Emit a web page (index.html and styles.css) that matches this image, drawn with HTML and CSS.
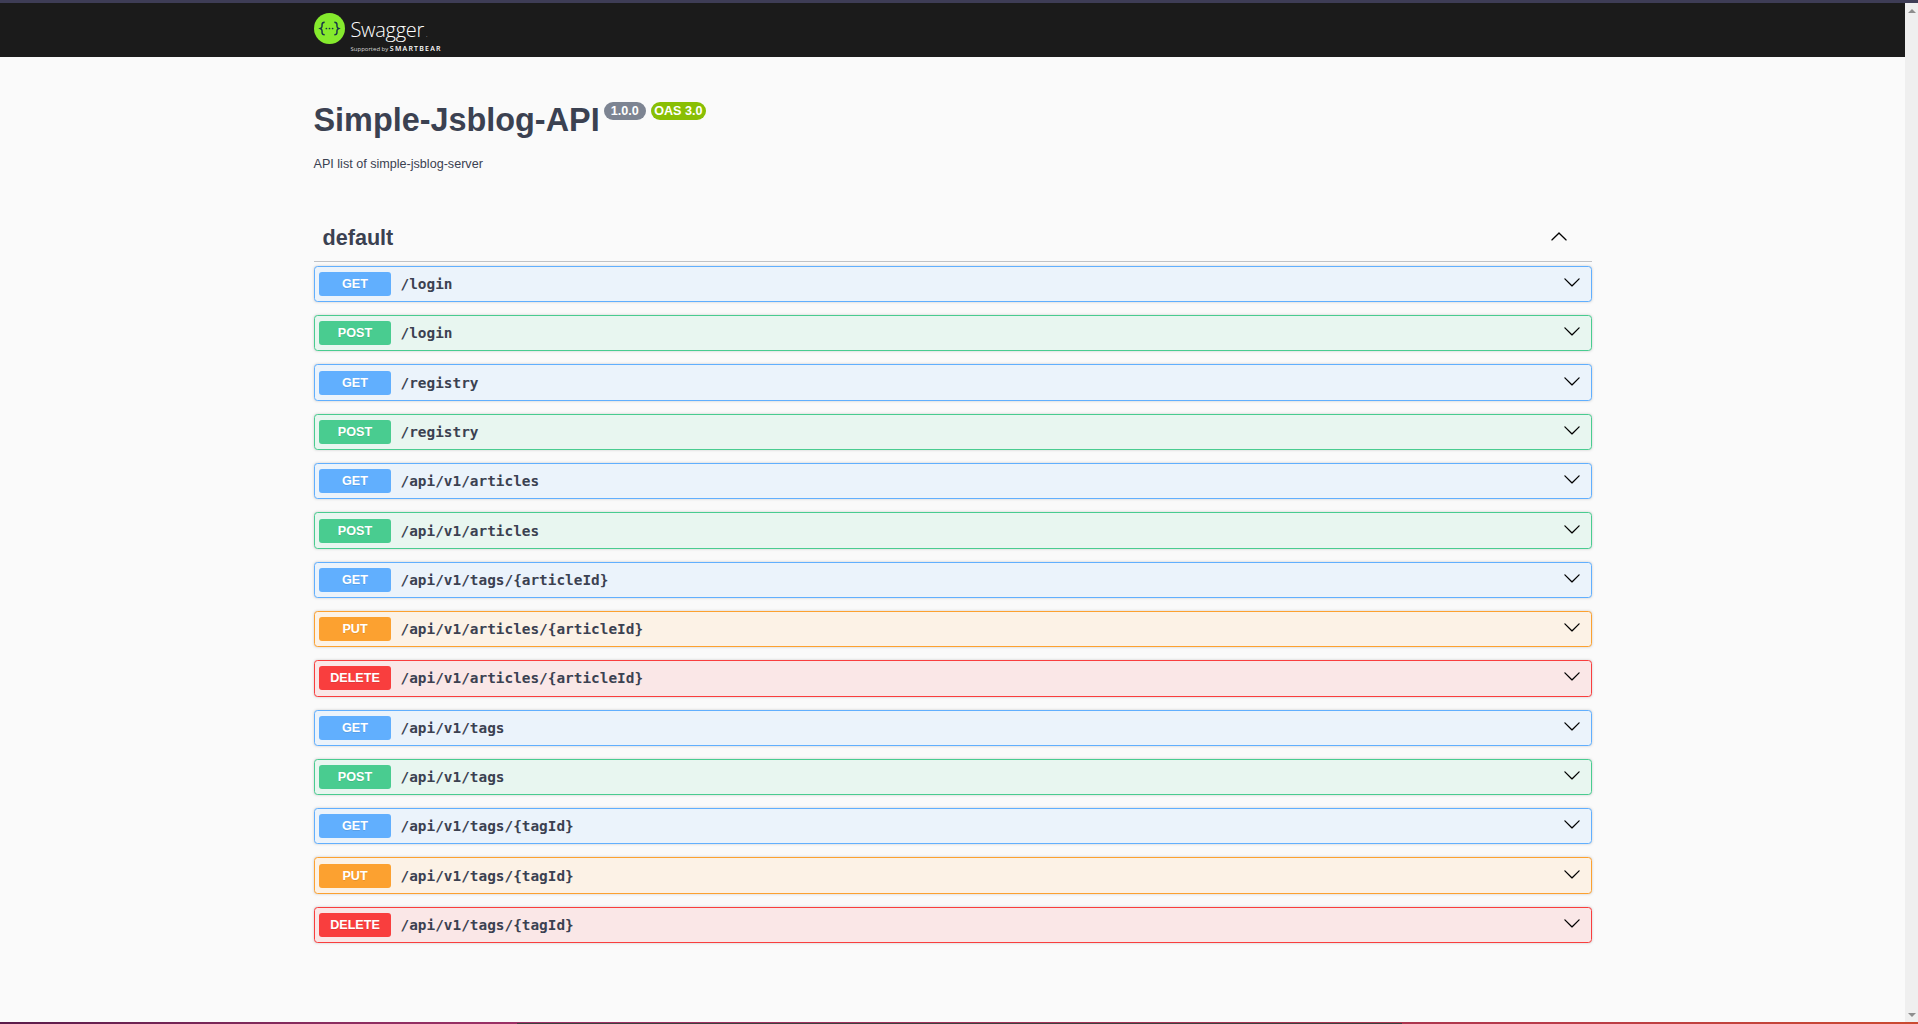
FILE: index.html
```html
<!DOCTYPE html>
<html lang="en">
<head>
  <meta name="viewport" content="width=device-width, initial-scale=1.0">
  <title>Swagger UI</title>
  <link rel="stylesheet" href="styles.css">
</head>
<body>
  <div class="top-stripe"></div>
  <div class="window">
    <div class="page">
      <!-- Top bar with logo -->
      <div class="topbar">
        <div class="wrapper topbar-inner">
          <svg class="logo-mark" viewBox="0 0 32 32" width="31" height="31">
            <circle cx="16" cy="16" r="16" fill="#85ea2d"/>
            <path d="M11 9.600c-2.300 0-2.700 1-2.700 2.300v1.700c0 1-.5 1.900-1.800 2.400 1.300.5 1.800 1.400 1.800 2.400v1.700c0 1.300.4 2.300 2.700 2.300M21 9.600c2.300 0 2.700 1 2.700 2.300v1.700c0 1 .5 1.900 1.800 2.400-1.300.5-1.800 1.400-1.800 2.400v1.700c0 1.300-.4 2.300-2.700 2.300" fill="none" stroke="#173647" stroke-width="1.500"/>
            <circle cx="12.800" cy="16" r=".9" fill="#173647"/>
            <circle cx="16" cy="16" r=".9" fill="#173647"/>
            <circle cx="19.200" cy="16" r=".9" fill="#173647"/>
          </svg>
          <div class="logo-text">
            <div class="logo-name">Swagger<span class="logo-dot">.</span></div>
            <div class="logo-sub">Supported by <span class="logo-bear">SMARTBEAR</span></div>
          </div>
        </div>
      </div>

      <div class="wrapper">
        <!-- API info -->
        <div class="info">
          <h2 class="title">
            <span class="title-text">Simple-Jsblog-API</span>
            <span class="pill pill-version">1.0.0</span>
            <span class="pill pill-oas">OAS 3.0</span>
          </h2>
          <p class="description">API list of simple-jsblog-server</p>
        </div>

        <!-- Endpoints -->
        <h3 class="tag">
          <span>default</span>
          <svg class="tag-arrow" viewBox="0 0 20 20" width="18" height="18"><path d="M17.418 14.908c.272.268.709.268.979 0s.271-.701 0-.969l-7.908-7.830c-.27-.268-.707-.268-.978 0l-7.908 7.830c-.27.268-.27.701 0 .969.271.268.709.268.979 0L10 7.770l7.418 7.138z"/></svg>
        </h3>
        <div class="op op-get"><span class="method">GET</span><span class="path">/login</span><svg class="arrow" viewBox="0 0 20 20" width="18" height="18"><path d="M17.418 6.109c.272-.268.709-.268.979 0s.271.701 0 .969l-7.908 7.830c-.27.268-.707.268-.978 0l-7.908-7.830c-.27-.268-.27-.701 0-.969.271-.268.709-.268.979 0L10 13.250l7.418-7.141z"/></svg></div>
        <div class="op op-post"><span class="method">POST</span><span class="path">/login</span><svg class="arrow" viewBox="0 0 20 20" width="18" height="18"><path d="M17.418 6.109c.272-.268.709-.268.979 0s.271.701 0 .969l-7.908 7.830c-.27.268-.707.268-.978 0l-7.908-7.830c-.27-.268-.27-.701 0-.969.271-.268.709-.268.979 0L10 13.250l7.418-7.141z"/></svg></div>
        <div class="op op-get"><span class="method">GET</span><span class="path">/registry</span><svg class="arrow" viewBox="0 0 20 20" width="18" height="18"><path d="M17.418 6.109c.272-.268.709-.268.979 0s.271.701 0 .969l-7.908 7.830c-.27.268-.707.268-.978 0l-7.908-7.830c-.27-.268-.27-.701 0-.969.271-.268.709-.268.979 0L10 13.250l7.418-7.141z"/></svg></div>
        <div class="op op-post"><span class="method">POST</span><span class="path">/registry</span><svg class="arrow" viewBox="0 0 20 20" width="18" height="18"><path d="M17.418 6.109c.272-.268.709-.268.979 0s.271.701 0 .969l-7.908 7.830c-.27.268-.707.268-.978 0l-7.908-7.830c-.27-.268-.27-.701 0-.969.271-.268.709-.268.979 0L10 13.250l7.418-7.141z"/></svg></div>
        <div class="op op-get"><span class="method">GET</span><span class="path">/api/v1/articles</span><svg class="arrow" viewBox="0 0 20 20" width="18" height="18"><path d="M17.418 6.109c.272-.268.709-.268.979 0s.271.701 0 .969l-7.908 7.830c-.27.268-.707.268-.978 0l-7.908-7.830c-.27-.268-.27-.701 0-.969.271-.268.709-.268.979 0L10 13.250l7.418-7.141z"/></svg></div>
        <div class="op op-post"><span class="method">POST</span><span class="path">/api/v1/articles</span><svg class="arrow" viewBox="0 0 20 20" width="18" height="18"><path d="M17.418 6.109c.272-.268.709-.268.979 0s.271.701 0 .969l-7.908 7.830c-.27.268-.707.268-.978 0l-7.908-7.830c-.27-.268-.27-.701 0-.969.271-.268.709-.268.979 0L10 13.250l7.418-7.141z"/></svg></div>
        <div class="op op-get"><span class="method">GET</span><span class="path">/api/v1/tags/{articleId}</span><svg class="arrow" viewBox="0 0 20 20" width="18" height="18"><path d="M17.418 6.109c.272-.268.709-.268.979 0s.271.701 0 .969l-7.908 7.830c-.27.268-.707.268-.978 0l-7.908-7.830c-.27-.268-.27-.701 0-.969.271-.268.709-.268.979 0L10 13.250l7.418-7.141z"/></svg></div>
        <div class="op op-put"><span class="method">PUT</span><span class="path">/api/v1/articles/{articleId}</span><svg class="arrow" viewBox="0 0 20 20" width="18" height="18"><path d="M17.418 6.109c.272-.268.709-.268.979 0s.271.701 0 .969l-7.908 7.830c-.27.268-.707.268-.978 0l-7.908-7.830c-.27-.268-.27-.701 0-.969.271-.268.709-.268.979 0L10 13.250l7.418-7.141z"/></svg></div>
        <div class="op op-delete"><span class="method">DELETE</span><span class="path">/api/v1/articles/{articleId}</span><svg class="arrow" viewBox="0 0 20 20" width="18" height="18"><path d="M17.418 6.109c.272-.268.709-.268.979 0s.271.701 0 .969l-7.908 7.830c-.27.268-.707.268-.978 0l-7.908-7.830c-.27-.268-.27-.701 0-.969.271-.268.709-.268.979 0L10 13.250l7.418-7.141z"/></svg></div>
        <div class="op op-get"><span class="method">GET</span><span class="path">/api/v1/tags</span><svg class="arrow" viewBox="0 0 20 20" width="18" height="18"><path d="M17.418 6.109c.272-.268.709-.268.979 0s.271.701 0 .969l-7.908 7.830c-.27.268-.707.268-.978 0l-7.908-7.830c-.27-.268-.27-.701 0-.969.271-.268.709-.268.979 0L10 13.250l7.418-7.141z"/></svg></div>
        <div class="op op-post"><span class="method">POST</span><span class="path">/api/v1/tags</span><svg class="arrow" viewBox="0 0 20 20" width="18" height="18"><path d="M17.418 6.109c.272-.268.709-.268.979 0s.271.701 0 .969l-7.908 7.830c-.27.268-.707.268-.978 0l-7.908-7.830c-.27-.268-.27-.701 0-.969.271-.268.709-.268.979 0L10 13.250l7.418-7.141z"/></svg></div>
        <div class="op op-get"><span class="method">GET</span><span class="path">/api/v1/tags/{tagId}</span><svg class="arrow" viewBox="0 0 20 20" width="18" height="18"><path d="M17.418 6.109c.272-.268.709-.268.979 0s.271.701 0 .969l-7.908 7.830c-.27.268-.707.268-.978 0l-7.908-7.830c-.27-.268-.27-.701 0-.969.271-.268.709-.268.979 0L10 13.250l7.418-7.141z"/></svg></div>
        <div class="op op-put"><span class="method">PUT</span><span class="path">/api/v1/tags/{tagId}</span><svg class="arrow" viewBox="0 0 20 20" width="18" height="18"><path d="M17.418 6.109c.272-.268.709-.268.979 0s.271.701 0 .969l-7.908 7.830c-.27.268-.707.268-.978 0l-7.908-7.830c-.27-.268-.27-.701 0-.969.271-.268.709-.268.979 0L10 13.250l7.418-7.141z"/></svg></div>
        <div class="op op-delete"><span class="method">DELETE</span><span class="path">/api/v1/tags/{tagId}</span><svg class="arrow" viewBox="0 0 20 20" width="18" height="18"><path d="M17.418 6.109c.272-.268.709-.268.979 0s.271.701 0 .969l-7.908 7.830c-.27.268-.707.268-.978 0l-7.908-7.830c-.27-.268-.27-.701 0-.969.271-.268.709-.268.979 0L10 13.250l7.418-7.141z"/></svg></div>
      </div>
    </div>

    <!-- Scrollbar of the browser window -->
    <div class="scrollbar">
      <span class="scroll-up"></span>
      <span class="scroll-down"></span>
    </div>
  </div>
  <div class="bottom-stripe"></div>
</body>
</html>
```

FILE: styles.css
```css
/* Basic styling */
html, body {
  height: 100%;
}

body {
  margin: 0;
  display: flex;
  flex-direction: column;
  overflow: hidden;
  background-color: #fafafa;
  color: #3b4151;
  font-family: "Liberation Sans", Arial, sans-serif;
}

.top-stripe {
  height: 3px;
  background-color: #3e3d56;
}

/* Two pixel rows: the lower one has a dark band in the middle */
.bottom-stripe {
  height: 2px;
  background:
    linear-gradient(#3f3f3f, #3f3f3f) 517px 1px / 885px 1px no-repeat,
    linear-gradient(to right, #5a1b4a, #8a2c5f 17%, #9c3066 27%, #a8344f 72%, #b83a4a 80%, #cb4a30);
}

.window {
  flex: 1;
  display: flex;
  min-height: 0;
}

.page {
  flex: 1;
  min-width: 0;
}

.wrapper {
  max-width: 1278px;
  margin: 0 auto;
}

/* Top bar */
.topbar {
  background-color: #1b1b1b;
  height: 54px;
}

.topbar-inner {
  display: flex;
  align-items: flex-start;
  gap: 6px;
  padding-top: 9.500px;
}

.logo-mark {
  flex-shrink: 0;
}

.logo-text {
  color: #fff;
  font-family: "Open Sans", sans-serif;
  padding-top: 8.500px;
}

.logo-name {
  font-size: 20px;
  font-weight: 300;
  letter-spacing: -0.3px;
  line-height: 17px;
}

.logo-dot {
  font-size: 6px;
  margin-left: 2px;
}

.logo-sub {
  font-size: 6px;
  line-height: 9px;
  color: #d8d8d8;
}

.logo-bear {
  font-size: 7px;
  font-weight: 600;
  letter-spacing: 1.2px;
  color: #fff;
}

/* API info */
.info {
  margin: 45px 0 42px;
}

.title {
  display: flex;
  align-items: flex-start;
  gap: 5px;
  margin: 0;
  font-size: 32.4px;
  font-weight: 700;
  line-height: 37px;
}

.title-text {
  margin-right: -1px;
}

.pill {
  padding: 2px 7px;
  border-radius: 51px;
  color: #fff;
  font-size: 12.6px;
  line-height: 14px;
}

.pill-version {
  background-color: #7d8492;
}

.pill-oas {
  padding: 2px 3.5px;
  background-color: #89bf04;
}

.description {
  margin: 18px 0 0;
  font-size: 12.6px;
  line-height: 14px;
}

/* Endpoint rows */
.tag {
  display: flex;
  align-items: center;
  justify-content: space-between;
  margin: 0 0 3.900px;
  padding: 10px 23.500px 8px 9px;
  border-bottom: 1px solid rgba(59, 65, 81, 0.3);
  font-size: 21.6px;
  font-weight: 700;
  line-height: 30px;
}

.tag-arrow {
  margin-bottom: 4px;
}

.op {
  display: flex;
  align-items: center;
  box-sizing: border-box;
  height: 36.300px;
  margin-bottom: 13px;
  padding: 0 10px 0 4.500px;
  border: 1px solid;
  border-radius: 3.600px;
  box-shadow: 0 0 3px rgba(0, 0, 0, 0.19);
}

.method {
  width: 72px;
  padding: 5px 0;
  margin-right: 9.500px;
  border-radius: 3px;
  color: #fff;
  font-size: 12.6px;
  font-weight: 700;
  line-height: 14px;
  text-align: center;
  text-shadow: 0 1px 0 rgba(0, 0, 0, 0.1);
}

.path {
  flex: 1;
  font-family: "DejaVu Sans Mono", monospace;
  font-size: 14.400px;
  font-weight: 600;
}

.arrow {
  margin-bottom: 4px;
}

.op-get {
  background-color: #ebf3fb;
  border-color: #61affe;
}

.op-get .method {
  background-color: #61affe;
}

.op-post {
  background-color: #e8f6f0;
  border-color: #49cc90;
}

.op-post .method {
  background-color: #49cc90;
}

.op-put {
  background-color: #fcf2e6;
  border-color: #fca130;
}

.op-put .method {
  background-color: #fca130;
}

.op-delete {
  background-color: #fae7e7;
  border-color: #f93e3e;
}

.op-delete .method {
  background-color: #f93e3e;
}

/* Scrollbar */
.scrollbar {
  width: 13px;
  display: flex;
  flex-direction: column;
  justify-content: space-between;
  align-items: center;
  padding: 6px 0 5px;
  background-color: #efefef;
}

.scroll-up {
  border-left: 4px solid transparent;
  border-right: 4px solid transparent;
  border-bottom: 4px solid #8e8e8e;
}

.scroll-down {
  border-left: 4px solid transparent;
  border-right: 4px solid transparent;
  border-top: 4px solid #8e8e8e;
}
```
